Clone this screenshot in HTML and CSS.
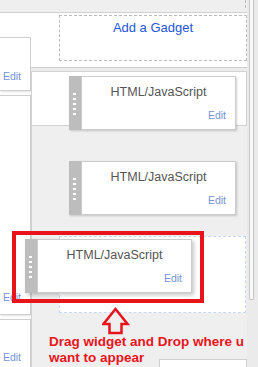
FILE: index.html
```html
<!DOCTYPE html>
<html lang="en">
<head>
  <meta charset="UTF-8" />
  <title>Layout - drag widget</title>
  <link rel="stylesheet" href="styles.css">
</head>
<body>
  <div class="page">
    <div class="layout">
      <div class="topband"><div class="topband-drop"></div></div>

      <aside class="sidebar">
        <div class="side-box box-a"><a class="edit">Edit</a></div>
        <div class="side-box box-b"><a class="edit">Edit</a></div>
        <div class="side-box box-c"><a class="edit">Edit</a></div>
      </aside>

      <main class="main">
        <section class="add-section">
          <div class="add-gadget">Add a Gadget</div>
        </section>
        <div class="divider"></div>
        <section class="widget-section">
          <div class="widget">
            <div class="widget-grip"><i></i><i></i><i></i><i></i><i></i></div>
            <div class="widget-body">
              <div class="widget-title">HTML/JavaScript</div>
              <a class="edit">Edit</a>
            </div>
          </div>
        </section>
        <div class="drop-area">
          <div class="widget widget-second">
            <div class="widget-grip"><i></i><i></i><i></i><i></i><i></i></div>
            <div class="widget-body">
              <div class="widget-title">HTML/JavaScript</div>
              <a class="edit">Edit</a>
            </div>
          </div>
          <div class="placeholder"></div>
          <div class="stub"></div>
        </div>
      </main>

      <div class="scroll"><div class="scroll-thumb"></div></div>
    </div>

    <!-- widget being dragged, with the red note frame -->
    <div class="drag-frame"></div>
    <div class="widget widget-dragging">
      <div class="widget-grip"><i></i><i></i><i></i><i></i><i></i></div>
      <div class="widget-body">
        <div class="widget-title">HTML/JavaScript</div>
        <a class="edit">Edit</a>
      </div>
    </div>

    <svg class="note-arrow" width="28" height="30" viewBox="0 0 28 30">
      <polygon points="13.5,2 25.5,17 19.5,17 19.5,26 7.5,26 7.5,17 1.5,17" fill="none" stroke="#e8141c" stroke-width="2.5" stroke-linejoin="miter"/>
    </svg>
    <p class="note">Drag widget and Drop where u<br>want to appear</p>
  </div>
</body>
</html>
```

FILE: styles.css
```css
* {
  box-sizing: border-box;
}
body {
  margin: 0;
  font-family: "Liberation Sans", Arial, sans-serif;
  background: #fff;
}
.page {
  position: relative;
  width: 258px;
  height: 367px;
  overflow: hidden;
}
.layout {
  display: grid;
  grid-template-columns: 31px 216px 11px;
  grid-template-rows: 13px 354px;
  height: 367px;
}
.topband {
  grid-column: 1 / 3;
  background: #efefef;
  border-bottom: 1px solid #d0d0d0;
}
.topband-drop {
  margin-left: 59px;
  width: 187px;
  height: 8px;
  border-right: 1px dashed #bbb;
}

/* left column */
.sidebar {
  background: #fff;
}
.side-box {
  width: 31px;
  margin-top: 4px;
  background: #fff;
  border: 1px solid #cfcfcf;
  border-left: 0;
  box-shadow: 1px 1px 2px rgba(0, 0, 0, 0.12);
  padding-right: 9px;
  text-align: right;
}
.box-a {
  margin-top: 24px;
  height: 54px;
  padding-top: 31px;
}
.box-b {
  height: 220px;
  padding-top: 194px;
}
.box-c {
  height: 60px;
  padding-top: 30px;
}
.edit {
  display: block;
  font-size: 10.5px;
  line-height: 14px;
  color: #7593d6;
}

/* main column */
.main {
  display: flex;
  flex-direction: column;
  min-height: 0;
}
.main > * {
  flex-shrink: 0;
}
.add-section {
  height: 54px;
  padding-top: 2px;
  padding-left: 28px;
  background: #fff;
}
.add-gadget {
  height: 46px;
  border: 1px dashed #bdbdbd;
  padding-top: 4px;
  text-align: center;
  font-size: 13px;
  line-height: 16px;
  color: #2456da;
}
.divider {
  height: 4px;
  background: #ececec;
  border-top: 1px solid #cdcdcd;
}
.widget-section {
  height: 55px;
  background: #fff;
  border: 1px solid #d2d2d2;
  padding: 4px 0 0 37px;
}
.drop-area {
  flex-grow: 1;
  background: #efefef;
  border-left: 1px solid #d2d2d2;
  padding-left: 37px;
}

/* widget */
.widget {
  position: relative;
  z-index: 1;
  display: flex;
  flex-shrink: 0;
  width: 167px;
  height: 54px;
  box-shadow: 1px 1px 2px rgba(0, 0, 0, 0.18);
}
.widget-grip {
  width: 12px;
  background: #bdbdbd;
  display: flex;
  flex-direction: column;
  gap: 3px;
  padding: 17px 0 0 4px;
}
.widget-grip i {
  display: block;
  width: 3px;
  height: 2px;
  background: #fff;
}
.widget-body {
  flex: 1;
  background: #fff;
  border: 1px solid #cbcbcb;
  padding: 7px 9px 0 0;
}
.widget-title {
  text-align: center;
  font-size: 12.5px;
  line-height: 16px;
  color: #555;
  padding-left: 9px;
}
.widget-body .edit {
  margin-top: 8px;
  text-align: right;
}
.widget-second {
  margin-top: 35px;
}
.placeholder {
  margin: 21px 0 0 -10px;
  width: 187px;
  height: 77px;
  background: #fff;
  border: 1px dashed #c6d6f6;
}
.stub {
  margin: 46px 0 0 90px;
  width: 88px;
  height: 30px;
  background: #fff;
  border: 1px solid #cfcfcf;
}

/* right strip */
.scroll {
  grid-column: 3;
  grid-row: 1 / 3;
  background: #ebebeb;
  padding-left: 2px;
}
.scroll-thumb {
  width: 5px;
  height: 300px;
  background: #f8f8f8;
  border: 1px solid #c6c6c6;
  border-top: 0;
  border-radius: 0 0 2px 2px;
}

/* drag overlay and note */
.drag-frame {
  position: absolute;
  left: 12px;
  top: 231px;
  width: 192px;
  height: 72px;
  border: 4px solid #e8141c;
  z-index: 2;
}
.widget-dragging {
  position: absolute;
  left: 25px;
  top: 239px;
  z-index: 3;
  box-shadow: 2px 2px 4px rgba(0, 0, 0, 0.22);
}
.note-arrow {
  position: absolute;
  left: 102px;
  top: 307px;
}
.note {
  position: absolute;
  left: 49px;
  top: 334px;
  margin: 0;
  white-space: nowrap;
  font-size: 13.5px;
  font-weight: bold;
  line-height: 16px;
  color: #e8141c;
}
```
